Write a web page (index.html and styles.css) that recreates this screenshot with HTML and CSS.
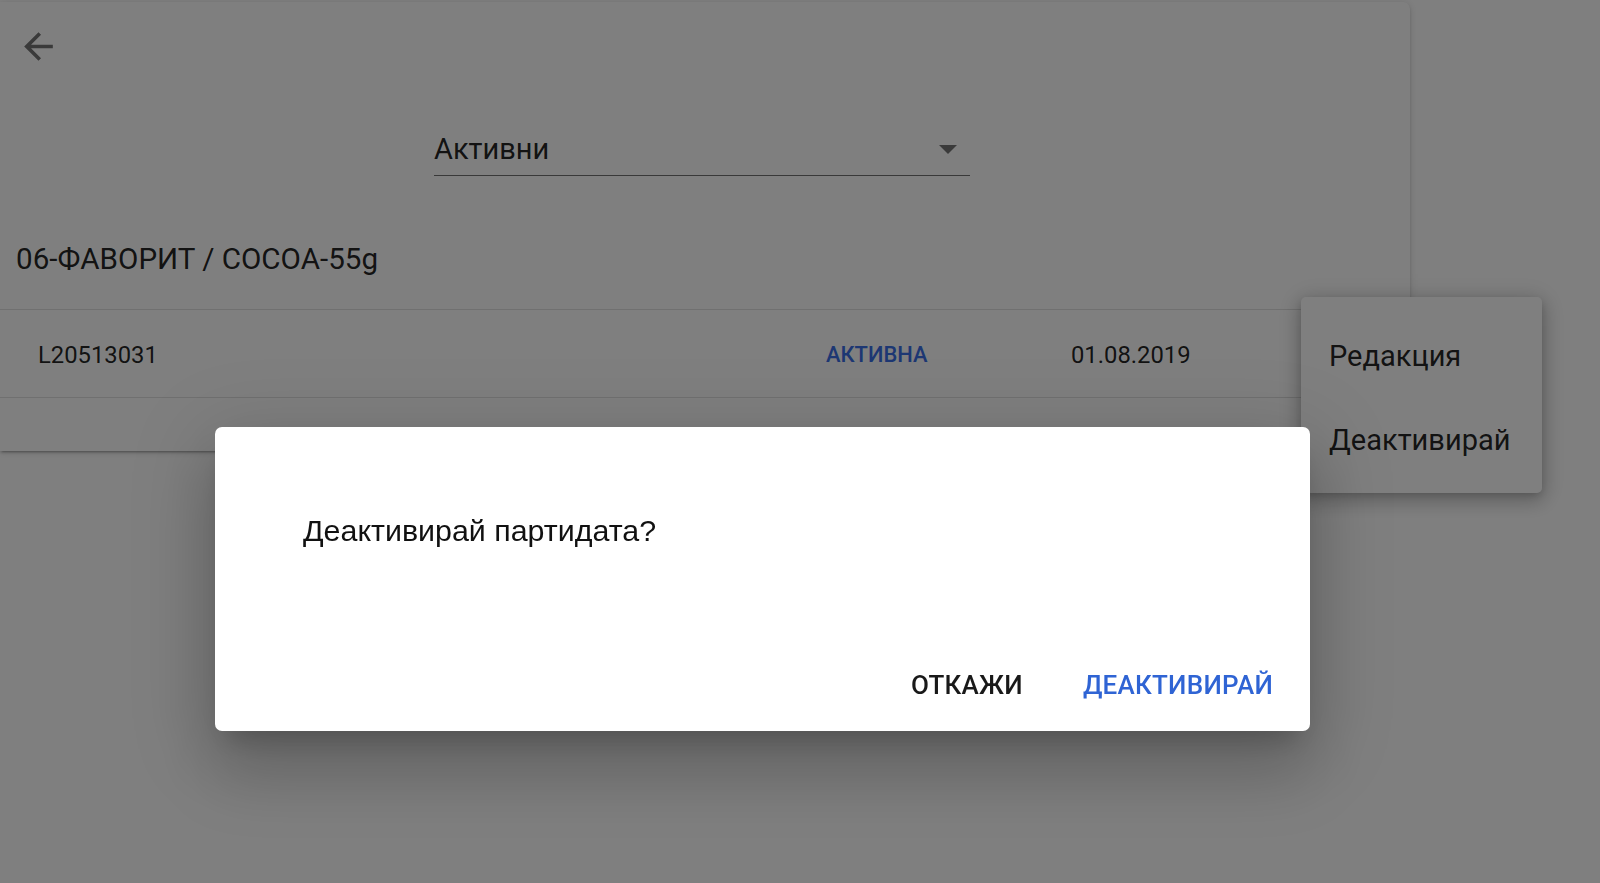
FILE: index.html
```html
<!DOCTYPE html>
<html lang="bg">
<head>
<meta charset="utf-8">
<title>Партиди</title>
<link rel="stylesheet" href="styles.css">
</head>
<body>
<div class="card">
  <button class="back" aria-label="Назад">
    <svg viewBox="0 0 24 24" width="43" height="43"><path d="M20 11H7.83l5.59-5.59L12 4l-8 8 8 8 1.41-1.41L7.83 13H20v-2z" fill="currentColor"/></svg>
  </button>
  <div class="filter-wrap">
    <div class="select">
      <span class="select-value">Активни</span>
      <span class="select-arrow"></span>
    </div>
  </div>
  <h2 class="title">06-ФАВОРИТ / COCOA-55g</h2>
  <div class="table">
    <div class="row">
      <span class="cell">L20513031</span>
      <span class="cell status">АКТИВНА</span>
      <span class="cell">01.08.2019</span>
    </div>
    <div class="footer"></div>
  </div>
</div>

<div class="menu">
  <div class="menu-item">Редакция</div>
  <div class="menu-item">Деактивирай</div>
</div>

<div class="overlay"></div>

<div class="dialog">
  <div class="dialog-content">Деактивирай партидата?</div>
  <div class="dialog-actions">
    <button class="btn">ОТКАЖИ</button>
    <button class="btn primary">ДЕАКТИВИРАЙ</button>
  </div>
</div>
</body>
</html>
```

FILE: styles.css
```css
html, body {
  margin: 0;
  padding: 0;
  background: #ffffff;
  font-family: Roboto, "Noto Sans", sans-serif;
  color: rgba(0, 0, 0, 0.87);
  width: 1600px;
  height: 883px;
  overflow: hidden;
}

.card {
  margin-top: 2px;
  width: 1410px;
  height: 449px;
  background: #ffffff;
  border-radius: 0 7px 7px 0;
  box-shadow: 0 3px 2px -2px rgba(0, 0, 0, 0.2), 0 2px 3px 0 rgba(0, 0, 0, 0.14), 0 1px 8px 0 rgba(0, 0, 0, 0.12);
  box-sizing: border-box;
  overflow: hidden;
}

.back {
  display: block;
  margin: 23px 0 0 17px;
  padding: 0;
  width: 43px;
  height: 43px;
  border: 0;
  background: none;
  color: rgba(0, 0, 0, 0.54);
}
.back svg { display: block; }

.filter-wrap {
  display: flex;
  justify-content: center;
  padding-right: 6px;
  margin-top: 63px;
}

.select {
  width: 536px;
  display: flex;
  align-items: center;
  justify-content: space-between;
  height: 36px;
  padding-bottom: 8px;
  border-bottom: 1px solid rgba(0, 0, 0, 0.55);
}

.select-value {
  font-size: 29px;
  line-height: 36px;
  color: rgba(0, 0, 0, 0.87);
}

.select-arrow {
  width: 0;
  height: 0;
  margin-right: 13px;
  border-left: 9px solid transparent;
  border-right: 9px solid transparent;
  border-top: 9px solid rgba(0, 0, 0, 0.54);
}

.title {
  margin: 65px 0 0 0;
  padding-left: 16px;
  font-size: 29.6px;
  line-height: 36px;
  font-weight: 400;
  color: rgba(0, 0, 0, 0.87);
}

.table {
  margin-top: 32px;
  border-top: 1px solid rgba(0, 0, 0, 0.12);
}

.row {
  display: grid;
  grid-template-columns: 788px 245px 1fr;
  align-items: center;
  height: 88px;
  padding-top: 2px;
  box-sizing: border-box;
  padding-left: 38px;
  border-bottom: 1px solid rgba(0, 0, 0, 0.12);
  font-size: 23.8px;
  color: rgba(0, 0, 0, 0.87);
}

.status {
  font-size: 21.9px;
  font-weight: 500;
  color: #3b6fe6;
}

.footer {
  height: 52px;
}

.menu {
  position: absolute;
  left: 1301px;
  top: 297px;
  width: 241px;
  padding: 17px 0 11px;
  background: #ffffff;
  border-radius: 5px;
  box-shadow: 0 3px 9px -2px rgba(0, 0, 0, 0.2), 0 7px 18px 2px rgba(0, 0, 0, 0.14), 0 3px 25px 4px rgba(0, 0, 0, 0.12);
  box-sizing: border-box;
}

.menu-item {
  height: 84px;
  line-height: 84px;
  padding: 0 28px;
  font-size: 29px;
  color: rgba(0, 0, 0, 0.87);
}

.overlay {
  position: fixed;
  inset: 0;
  background: rgba(0, 0, 0, 0.5);
}

.dialog {
  position: absolute;
  left: 215px;
  top: 427px;
  width: 1095px;
  height: 304px;
  background: #ffffff;
  border-radius: 7px;
  box-shadow: 0 19px 26px -12px rgba(0, 0, 0, 0.2), 0 42px 66px 5px rgba(0, 0, 0, 0.14), 0 16px 80px 14px rgba(0, 0, 0, 0.12);
  display: flex;
  flex-direction: column;
  box-sizing: border-box;
}

.dialog-content {
  padding: 85px 88px 0;
  font-family: "Liberation Sans", Arial, sans-serif;
  font-size: 30.4px;
  line-height: 36px;
  color: #111111;
}

.dialog-actions {
  margin-top: auto;
  display: flex;
  justify-content: flex-end;
  gap: 4px;
  padding: 0 9px 15px 0;
}

.btn {
  height: 63px;
  padding: 0 28px;
  border: 0;
  background: none;
  font-family: Roboto, "Noto Sans", sans-serif;
  font-size: 26px;
  font-weight: 500;
  letter-spacing: 0.25px;
  color: rgba(0, 0, 0, 0.9);
  cursor: pointer;
}

.btn.primary {
  color: #2f64d4;
}
```
